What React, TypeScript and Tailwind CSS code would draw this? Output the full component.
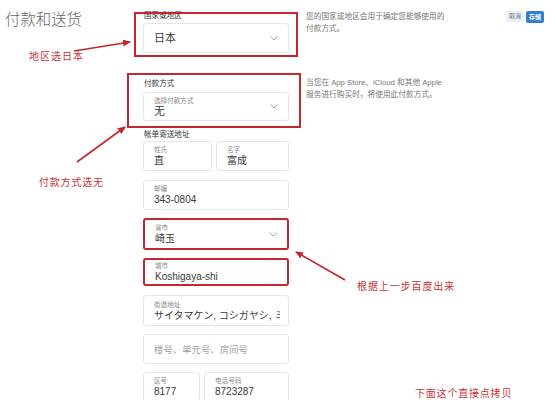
import type { ReactNode } from "react";

const RED = "#c1272d";

function Field({
  label,
  value,
  placeholder,
  select,
  red,
  big,
  className = "",
}: {
  label?: string;
  value?: string;
  placeholder?: string;
  select?: boolean;
  red?: boolean;
  big?: boolean;
  className?: string;
}) {
  return (
    <div
      className={
        "flex items-center bg-white rounded-[3px] pl-[10px] pr-[8px] " +
        (red ? "border-2 border-[#c1272d] pl-[9px] " : "border border-[#e6e6e6] ") +
        className
      }
    >
      <div className="flex-1 min-w-0 flex flex-col justify-center overflow-hidden">
        {label && <div className="text-[6.6px] leading-[9px] text-[#8a8a8a]">{label}</div>}
        {value && (
          <div
            className={
              (big ? "text-[11px] " : "text-[10px] ") +
              "leading-[13px] text-[#3a3a3a] whitespace-nowrap overflow-hidden"
            }
          >
            {value}
          </div>
        )}
        {placeholder && (
          <div className="text-[9.4px] leading-[13px] text-[#a0a0a0] whitespace-nowrap">{placeholder}</div>
        )}
      </div>
      {select && <Chevron />}
    </div>
  );
}

function Chevron() {
  return (
    <svg width="8" height="5" viewBox="0 0 8 5" className="shrink-0 mr-[2px]">
      <path d="M0.5 0.5 L4 4 L7.5 0.5" fill="none" stroke="#9a9a9a" strokeWidth="0.9" />
    </svg>
  );
}

function Label({ children, className = "" }: { children: ReactNode; className?: string }) {
  return <div className={"text-[7.6px] leading-[10px] text-[#333] " + className}>{children}</div>;
}

export default function App() {
  return (
    <div className="relative w-[556px] h-[400px] overflow-hidden bg-white font-['Liberation_Sans','Noto_Sans_CJK_SC',sans-serif]">
      <div className="flex">
        <div className="w-[143px] pl-[5px] pt-[9px]">
          <h1 className="text-[15.4px] leading-[22px] font-light text-[#666]">付款和送货</h1>
        </div>

        <div className="w-[146px] pt-[11px] flex flex-col">
          <Label className="pl-[1px]">国家或地区</Label>
          <Field value="日本" select big className="mt-[2px] h-[30px]" />

          <Label className="mt-[26px] pl-[1px]">付款方式</Label>
          <Field label="选择付款方式" value="无" select big className="mt-[3px] h-[29px]" />

          <Label className="mt-[9px] pl-[1px]">帐单寄送地址</Label>
          <div className="mt-[1px] flex gap-[4px]">
            <Field label="姓氏" value="直" className="w-[69px] h-[30px]" />
            <Field label="名字" value="富成" className="flex-1 h-[30px]" />
          </div>

          <Field label="邮编" value="343-0804" className="mt-[9px] h-[30px]" />
          <Field label="省市" value="崎玉" select red className="mt-[8px] h-[32px]" />
          <Field label="城市" value="Koshigaya-shi" red className="mt-[8px] h-[28px]" />
          <Field
            label="街道地址"
            value="サイタマケン, コシガヤシ, ミナミコシガヤ"
            className="mt-[9px] h-[31px]"
          />
          <Field placeholder="楼号、单元号、房间号" className="mt-[8px] h-[30px]" />
          <div className="mt-[8px] flex gap-[4px]">
            <Field label="区号" value="8177" className="w-[57px] h-[30px]" />
            <Field label="电话号码" value="8723287" className="flex-1 h-[30px]" />
          </div>
        </div>

        <div className="ml-[17px] pt-[11px] flex flex-col text-[7.7px] leading-[11.5px] text-[#777]">
          <p>
            您的国家或地区会用于确定您能够使用的
            <br />
            付款方式。
          </p>
          <p className="mt-[43px]">
            当您在 App Store、iCloud 和其他 Apple
            <br />
            服务进行购买时，将使用此付款方式。
          </p>
        </div>

        <div className="ml-auto mr-[12px] pt-[11px] flex gap-[2px] items-start">
          <button className="h-[11px] px-[3px] rounded-[2px] bg-[#eaeff3] text-[6px] leading-[11px] text-[#5b7a99]">
            取消
          </button>
          <button className="h-[12px] px-[3px] rounded-[2px] bg-[#2f80d1] text-[6px] leading-[12px] font-bold text-white">
            存储
          </button>
        </div>
      </div>

      {/* annotation boxes */}
      <div className="absolute left-[134px] top-[12px] w-[164px] h-[45px] border-2 border-[#c1272d] pointer-events-none" />
      <div className="absolute left-[127px] top-[73px] w-[174px] h-[55px] border-2 border-[#c1272d] pointer-events-none" />

      {/* annotation texts */}
      <div className="absolute left-[29px] top-[50px] text-[10px] leading-[14px] tracking-[1px] text-[#c6353a]">
        地区选日本
      </div>
      <div className="absolute left-[39px] top-[176px] text-[10px] leading-[14px] tracking-[0.8px] text-[#c6353a]">
        付款方式选无
      </div>
      <div className="absolute left-[357px] top-[280px] text-[10px] leading-[14px] tracking-[0.9px] text-[#c6353a]">
        根据上一步百度出来
      </div>
      <div className="absolute left-[415px] top-[387px] text-[10px] leading-[14px] tracking-[0.8px] text-[#c6353a]">
        下面这个直接点拷贝
      </div>

      {/* arrows */}
      <svg className="absolute inset-0 pointer-events-none" width="556" height="400">
        <defs>
          <marker id="ah" markerWidth="8" markerHeight="8" refX="7" refY="4" orient="auto" markerUnits="userSpaceOnUse">
            <path d="M0 0.5 L8 4 L0 7.5 Z" fill={RED} />
          </marker>
        </defs>
        <line x1="74" y1="51" x2="130" y2="42" stroke={RED} strokeWidth="1.6" markerEnd="url(#ah)" />
        <line x1="77" y1="162" x2="125" y2="127" stroke={RED} strokeWidth="1.6" markerEnd="url(#ah)" />
        <line x1="345" y1="280" x2="296" y2="252" stroke={RED} strokeWidth="1.6" markerEnd="url(#ah)" />
      </svg>
    </div>
  );
}
